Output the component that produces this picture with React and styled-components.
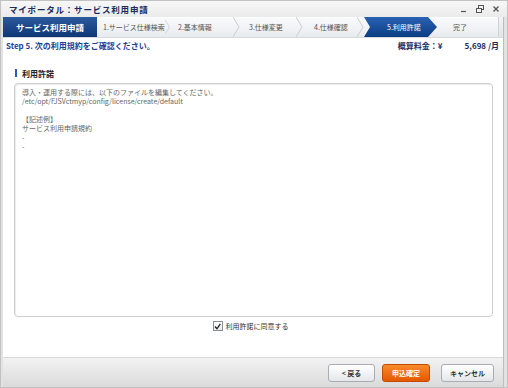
import React from 'react';
import styled, { createGlobalStyle } from 'styled-components';

const GlobalStyle = createGlobalStyle`
  html, body { margin: 0; padding: 0; background: #fff; }
  body { font-family: "Noto Sans CJK JP", "Noto Sans", sans-serif; }
`;

const Window = styled.div`
  width: 508px;
  height: 388px;
  box-sizing: border-box;
  display: flex;
  flex-direction: column;
  background: #e2e2e2;
  border: 1px solid #c2c2c2;
  padding: 0 3px 0 2px;
`;

const TitleBar = styled.div`
  height: 16px;
  flex-shrink: 0;
  display: flex;
  align-items: center;
  justify-content: space-between;
  padding: 0 2px 0 8px;
  background: linear-gradient(#f7f7f7, #ebebeb);
  margin: 0 -3px 0 -2px;
`;

const Title = styled.span`
  font-size: 8.5px;
  letter-spacing: 0.8px;
  font-weight: bold;
  color: #1c2b5e;
`;

const Controls = styled.div`
  display: flex;
  gap: 8px;
  align-items: center;
  padding-right: 5px;
`;

const Panel = styled.div`
  flex: 1;
  display: flex;
  flex-direction: column;
  background: #fff;
  border-right: 1px solid #bdbdbd;
`;

const StepBar = styled.div`
  height: 20px;
  flex-shrink: 0;
  display: flex;
  background: linear-gradient(#fbfbfc, #e8ebee);
  border-bottom: 1px solid #d6d9dd;
`;

const Brand = styled.div`
  width: 94px;
  display: flex;
  align-items: center;
  justify-content: center;
  background: linear-gradient(#2c5a9e, #0e3775);
  color: #fff;
  font-size: 8.5px;
  font-weight: bold;
`;

const Step = styled.div`
  width: ${(p) => p.$w}px;
  display: flex;
  align-items: center;
  font-size: 7px;
  color: ${(p) => (p.$active ? '#fff' : '#555')};
  background: ${(p) => (p.$active ? 'linear-gradient(#2a62b4, #0c3c82)' : 'transparent')};
  clip-path: ${(p) =>
    p.$active ? 'polygon(0 0, calc(100% - 9px) 0, 100% 50%, calc(100% - 9px) 100%, 0 100%, 6px 50%)' : 'none'};
`;

const StepLabel = styled.span`
  flex: 1;
  padding-left: ${(p) => p.$pl}px;
  white-space: nowrap;
`;

const StepFill = styled.div`
  flex: 1;
  border-left: 1px solid #cfd2d6;
  background: linear-gradient(#f3f3f3, #e4e4e4);
`;

const InfoRow = styled.div`
  height: 14px;
  flex-shrink: 0;
  display: flex;
  align-items: center;
  justify-content: space-between;
  padding: 0 4px 0 3px;
  font-size: 8px;
  font-weight: bold;
`;

const StepText = styled.span`
  color: #1b3f96;
`;

const Price = styled.div`
  display: flex;
  gap: 22px;
  color: #1c2b5e;
`;

const Content = styled.div`
  flex: 1;
  display: flex;
  flex-direction: column;
  padding: 16px 10px 0 11px;
`;

const Heading = styled.div`
  height: 10px;
  display: flex;
  align-items: center;
  gap: 5px;
  padding-left: 1px;
  font-size: 8px;
  font-weight: bold;
  color: #222;
  &::before {
    content: '';
    width: 2px;
    height: 8px;
    background: #2a5bb8;
  }
`;

const TermsBox = styled.div`
  margin-top: 5px;
  height: 234px;
  box-sizing: border-box;
  border: 1px solid #cfcfcf;
  border-radius: 4px;
  box-shadow: inset 1px 1px 1px #ececec;
  padding: 4px 7px;
  font-size: 7px;
  line-height: 9px;
  color: #666;
  white-space: pre-line;
`;

const AgreeRow = styled.label`
  height: 18px;
  display: flex;
  align-items: center;
  justify-content: center;
  gap: 3px;
  font-size: 7px;
  color: #333;
  padding-right: 6px;
`;

const Check = styled.span`
  width: 8px;
  height: 8px;
  border: 1px solid #8a8f96;
  background: linear-gradient(#fff, #e9e9e9);
  display: flex;
  align-items: center;
  justify-content: center;
`;

const Footer = styled.div`
  height: 29px;
  flex-shrink: 0;
  display: flex;
  align-items: center;
  justify-content: flex-end;
  gap: 7px;
  padding-right: 9px;
  background: linear-gradient(#f2f2f2, #e4e4e4 60%, #dadada);
  border-top: 1px solid #d8d8d8;
`;

const Button = styled.button`
  width: ${(p) => p.$w}px;
  height: 18px;
  padding: 0;
  margin-left: ${(p) => p.$ml || 0}px;
  border-radius: 3px;
  font-family: inherit;
  font-size: 7px;
  font-weight: bold;
  border: 1px solid ${(p) => (p.$primary ? '#c44b00' : '#a9adb3')};
  color: ${(p) => (p.$primary ? '#fff' : '#333')};
  background: ${(p) =>
    p.$primary ? 'linear-gradient(#f88a2a, #e45800)' : 'linear-gradient(#ffffff, #e4e6e9)'};
`;

const steps = [
  { label: '1.サービス仕様検索', w: 73, pl: 6 },
  { label: '2.基本情報', w: 70, pl: 8 },
  { label: '3.仕様変更', w: 63, pl: 9 },
  { label: '4.仕様確認', w: 61, pl: 11 },
  { label: '5.利用許諾', w: 73, pl: 23, active: true },
  { label: '完了', w: 61, pl: 16, last: true },
];

const terms = `導入・運用する際には、以下のファイルを編集してください。
/etc/opt/FJSVctmyp/config/license/create/default

【記述例】
サービス利用申請規約
-
-`;

const Chevron = () => (
  <svg width="7" height="20" viewBox="0 0 7 20">
    <polyline points="0,0 6,10 0,20" fill="none" stroke="#c9cdd2" strokeWidth="1" />
  </svg>
);

export default function App() {
  return (
    <>
      <GlobalStyle />
      <Window>
        <TitleBar>
          <Title>マイポータル：サービス利用申請</Title>
          <Controls>
            <svg width="8" height="8" viewBox="0 0 8 8">
              <line x1="1" y1="6.5" x2="6" y2="6.5" stroke="#555" strokeWidth="1.2" />
            </svg>
            <svg width="8" height="8" viewBox="0 0 8 8">
              <rect x="2.5" y="0.5" width="5" height="4" fill="none" stroke="#555" />
              <rect x="0.5" y="3.5" width="5" height="4" fill="#f0f0f0" stroke="#555" />
            </svg>
            <svg width="8" height="8" viewBox="0 0 8 8">
              <path d="M1.5 1.5 L6.5 6.5 M6.5 1.5 L1.5 6.5" stroke="#555" strokeWidth="1.3" />
            </svg>
          </Controls>
        </TitleBar>
        <Panel>
          <StepBar>
            <Brand>サービス利用申請</Brand>
            {steps.map((s) => (
              <Step key={s.label} $w={s.w} $active={s.active}>
                <StepLabel $pl={s.pl}>{s.label}</StepLabel>
                {!s.active && !s.last && <Chevron />}
              </Step>
            ))}
            <StepFill />
          </StepBar>
          <InfoRow>
            <StepText>Step 5. 次の利用規約をご確認ください。</StepText>
            <Price>
              <span>概算料金：¥</span>
              <span>5,698 /月</span>
            </Price>
          </InfoRow>
          <Content>
            <Heading>利用許諾</Heading>
            <TermsBox>{terms}</TermsBox>
            <AgreeRow>
              <Check>
                <svg width="7" height="7" viewBox="0 0 7 7">
                  <polyline points="1,3.5 3,5.8 6.3,0.8" fill="none" stroke="#222" strokeWidth="1.3" />
                </svg>
              </Check>
              利用許諾に同意する
            </AgreeRow>
          </Content>
          <Footer>
            <Button $w={47}>&lt; 戻る</Button>
            <Button $w={48} $primary>申込確定</Button>
            <Button $w={53} $ml={4}>キャンセル</Button>
          </Footer>
        </Panel>
      </Window>
    </>
  );
}
